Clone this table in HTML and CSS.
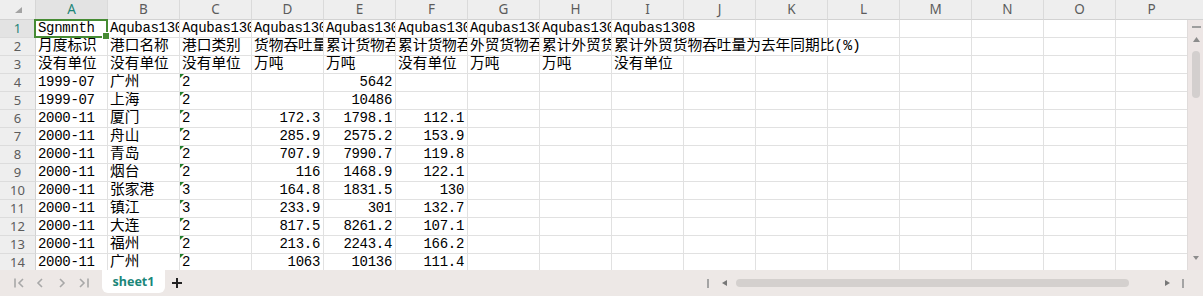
FILE: index.html
```html
<!DOCTYPE html>
<html lang="zh-CN">
<head>
<meta charset="utf-8">
<title>sheet1</title>
<link rel="stylesheet" href="styles.css">
</head>
<body>
<div class="app">
  <div class="main">
    <div class="sheet">
      <div class="grid">
        <div class="corner"><svg width="7" height="6" viewBox="0 0 7 6"><polygon points="7,0 7,6 0,6" fill="#a3a3a3"/></svg></div>
        <div class="ch active">A</div><div class="ch">B</div><div class="ch">C</div><div class="ch">D</div><div class="ch">E</div><div class="ch">F</div><div class="ch">G</div><div class="ch">H</div><div class="ch">I</div><div class="ch">J</div><div class="ch">K</div><div class="ch">L</div><div class="ch">M</div><div class="ch">N</div><div class="ch">O</div><div class="ch">P</div>

        <div class="rh active">1</div>
        <div class="c sel">Sgnmnth</div><div class="c">Aqubas1301</div><div class="c">Aqubas1302</div><div class="c">Aqubas1303</div><div class="c">Aqubas1304</div><div class="c">Aqubas1305</div><div class="c">Aqubas1306</div><div class="c">Aqubas1307</div><div class="c span2">Aqubas1308</div>
        <div class="c"></div><div class="c"></div><div class="c"></div><div class="c"></div><div class="c"></div><div class="c"></div>

        <div class="rh">2</div>
        <div class="c zh">月度标识</div><div class="c zh">港口名称</div><div class="c zh">港口类别</div><div class="c zh">货物吞吐量</div><div class="c zh">累计货物吞吐量</div><div class="c zh">累计货物吞吐量为去年同期比(%)</div><div class="c zh">外贸货物吞吐量</div><div class="c zh">累计外贸货物吞吐量</div><div class="c zh span4">累计外贸货物吞吐量为去年同期比(%)</div>
        <div class="c"></div><div class="c"></div><div class="c"></div><div class="c"></div>

        <div class="rh">3</div>
        <div class="c zh">没有单位</div><div class="c zh">没有单位</div><div class="c zh">没有单位</div><div class="c zh">万吨</div><div class="c zh">万吨</div><div class="c zh">没有单位</div><div class="c zh">万吨</div><div class="c zh">万吨</div><div class="c zh">没有单位</div>
        <div class="c"></div><div class="c"></div><div class="c"></div><div class="c"></div><div class="c"></div><div class="c"></div><div class="c"></div>

        <div class="rh">4</div>
        <div class="c">1999-07</div><div class="c zh">广州</div><div class="c t">2</div><div class="c n"></div><div class="c n">5642</div><div class="c n"></div>
        <div class="c"></div><div class="c"></div><div class="c"></div><div class="c"></div><div class="c"></div><div class="c"></div><div class="c"></div><div class="c"></div><div class="c"></div><div class="c"></div>

        <div class="rh">5</div>
        <div class="c">1999-07</div><div class="c zh">上海</div><div class="c t">2</div><div class="c n"></div><div class="c n">10486</div><div class="c n"></div>
        <div class="c"></div><div class="c"></div><div class="c"></div><div class="c"></div><div class="c"></div><div class="c"></div><div class="c"></div><div class="c"></div><div class="c"></div><div class="c"></div>

        <div class="rh">6</div>
        <div class="c">2000-11</div><div class="c zh">厦门</div><div class="c t">2</div><div class="c n">172.3</div><div class="c n">1798.1</div><div class="c n">112.1</div>
        <div class="c"></div><div class="c"></div><div class="c"></div><div class="c"></div><div class="c"></div><div class="c"></div><div class="c"></div><div class="c"></div><div class="c"></div><div class="c"></div>

        <div class="rh">7</div>
        <div class="c">2000-11</div><div class="c zh">舟山</div><div class="c t">2</div><div class="c n">285.9</div><div class="c n">2575.2</div><div class="c n">153.9</div>
        <div class="c"></div><div class="c"></div><div class="c"></div><div class="c"></div><div class="c"></div><div class="c"></div><div class="c"></div><div class="c"></div><div class="c"></div><div class="c"></div>

        <div class="rh">8</div>
        <div class="c">2000-11</div><div class="c zh">青岛</div><div class="c t">2</div><div class="c n">707.9</div><div class="c n">7990.7</div><div class="c n">119.8</div>
        <div class="c"></div><div class="c"></div><div class="c"></div><div class="c"></div><div class="c"></div><div class="c"></div><div class="c"></div><div class="c"></div><div class="c"></div><div class="c"></div>

        <div class="rh">9</div>
        <div class="c">2000-11</div><div class="c zh">烟台</div><div class="c t">2</div><div class="c n">116</div><div class="c n">1468.9</div><div class="c n">122.1</div>
        <div class="c"></div><div class="c"></div><div class="c"></div><div class="c"></div><div class="c"></div><div class="c"></div><div class="c"></div><div class="c"></div><div class="c"></div><div class="c"></div>

        <div class="rh">10</div>
        <div class="c">2000-11</div><div class="c zh">张家港</div><div class="c t">3</div><div class="c n">164.8</div><div class="c n">1831.5</div><div class="c n">130</div>
        <div class="c"></div><div class="c"></div><div class="c"></div><div class="c"></div><div class="c"></div><div class="c"></div><div class="c"></div><div class="c"></div><div class="c"></div><div class="c"></div>

        <div class="rh">11</div>
        <div class="c">2000-11</div><div class="c zh">镇江</div><div class="c t">3</div><div class="c n">233.9</div><div class="c n">301</div><div class="c n">132.7</div>
        <div class="c"></div><div class="c"></div><div class="c"></div><div class="c"></div><div class="c"></div><div class="c"></div><div class="c"></div><div class="c"></div><div class="c"></div><div class="c"></div>

        <div class="rh">12</div>
        <div class="c">2000-11</div><div class="c zh">大连</div><div class="c t">2</div><div class="c n">817.5</div><div class="c n">8261.2</div><div class="c n">107.1</div>
        <div class="c"></div><div class="c"></div><div class="c"></div><div class="c"></div><div class="c"></div><div class="c"></div><div class="c"></div><div class="c"></div><div class="c"></div><div class="c"></div>

        <div class="rh">13</div>
        <div class="c">2000-11</div><div class="c zh">福州</div><div class="c t">2</div><div class="c n">213.6</div><div class="c n">2243.4</div><div class="c n">166.2</div>
        <div class="c"></div><div class="c"></div><div class="c"></div><div class="c"></div><div class="c"></div><div class="c"></div><div class="c"></div><div class="c"></div><div class="c"></div><div class="c"></div>

        <div class="rh">14</div>
        <div class="c">2000-11</div><div class="c zh">广州</div><div class="c t">2</div><div class="c n">1063</div><div class="c n">10136</div><div class="c n">111.4</div>
        <div class="c"></div><div class="c"></div><div class="c"></div><div class="c"></div><div class="c"></div><div class="c"></div><div class="c"></div><div class="c"></div><div class="c"></div><div class="c"></div>
      </div>
    </div>
    <div class="vbar">
      <div class="vbar-head"></div>
      <div class="vbar-track">
        <div class="vdash"></div>
        <svg class="varrow-up" width="7" height="5" viewBox="0 0 7 5"><polygon points="3.5,0 7,5 0,5" fill="#8c8c8c"/></svg>
        <div class="vthumb"></div>
        <svg class="varrow-down" width="6" height="4" viewBox="0 0 6 4"><polygon points="0,0 6,0 3,4" fill="#8c8c8c"/></svg>
      </div>
    </div>
  </div>
  <div class="tabbar">
    <svg class="nav" width="76" height="10" viewBox="0 0 76 10">
      <g fill="none" stroke="#a8a8a8" stroke-width="1.6">
        <line x1="1" y1="0.5" x2="1" y2="9.5"/>
        <polyline points="9,1 5,5 9,9"/>
        <polyline points="28,1 24,5 28,9"/>
        <polyline points="46,1 50,5 46,9"/>
        <polyline points="66,1 70,5 66,9"/>
        <line x1="74" y1="0.5" x2="74" y2="9.5"/>
      </g>
    </svg>
    <div class="tab">sheet1</div>
    <svg class="add" width="10" height="10" viewBox="0 0 10 10">
      <g stroke="#222" stroke-width="2"><line x1="0" y1="5" x2="10" y2="5"/><line x1="5" y1="0" x2="5" y2="10"/></g>
    </svg>
    <div class="hscroll">
      <div class="hbar"></div>
      <svg class="hleft" width="5" height="6" viewBox="0 0 5 6"><polygon points="5,0 5,6 0,3" fill="#777"/></svg>
      <div class="htrack"></div>
      <svg class="hright" width="5" height="6" viewBox="0 0 5 6"><polygon points="0,0 0,6 5,3" fill="#777"/></svg>
      <div class="hbar"></div>
    </div>
  </div>
</div>
</body>
</html>
```

FILE: styles.css
```css
* {
  box-sizing: border-box;
  margin: 0;
  padding: 0;
}

body {
  width: 1203px;
  height: 296px;
  overflow: hidden;
  background: #ffffff;
  font-family: "Liberation Mono", "Noto Sans CJK SC", monospace;
}

.app {
  display: flex;
  flex-direction: column;
  height: 296px;
}

.main {
  display: flex;
  height: 270px;
  overflow: hidden;
}

.sheet {
  flex: none;
  width: 1187px;
  overflow: hidden;
}

.grid {
  display: grid;
  grid-template-columns: 36px repeat(16, 72px);
  grid-template-rows: 20px;
  grid-auto-rows: 18px;
  width: 1188px;
}

.corner {
  display: flex;
  justify-content: flex-end;
  align-items: flex-end;
  padding: 0 13px 6px 0;
  background: #eeeeee;
  border-right: 1px solid #d6d6d6;
  border-bottom: 1px solid #d2d2d2;
}

.ch {
  background: #eeeeee;
  border-right: 1px solid #dadada;
  border-bottom: 1px solid #d2d2d2;
  font-family: "Noto Sans", "Noto Sans CJK SC", sans-serif;
  font-size: 13.5px;
  line-height: 19px;
  color: #5c5c5c;
  text-align: center;
}

.rh {
  background: #eeeeee;
  border-right: 1px solid #d2d2d2;
  border-bottom: 1px solid #dcdcdc;
  font-family: "Noto Sans", "Noto Sans CJK SC", sans-serif;
  font-size: 13px;
  line-height: 17px;
  color: #5c5c5c;
  text-align: center;
}

.ch.active,
.rh.active {
  background: #e3e3e3;
  color: #1d8577;
}

.c {
  border-right: 1px solid #e1e1e1;
  border-bottom: 1px solid #e1e1e1;
  padding: 0 2px;
  white-space: nowrap;
  overflow: hidden;
  font-size: 14px;
  letter-spacing: -0.3px;
  line-height: 17px;
  color: #000000;
}

.zh {
  font-size: 14.7px;
  letter-spacing: 0;
}

.n {
  text-align: right;
  padding-right: 3px;
}

.t {
  position: relative;
}

.t::before {
  content: "";
  position: absolute;
  top: 0;
  left: 0;
  border-top: 4px solid #1f7f2a;
  border-right: 4px solid transparent;
}

.span2 {
  grid-column: span 2;
}

.span4 {
  grid-column: span 4;
}

.sel {
  position: relative;
  overflow: visible;
}

.sel::before {
  content: "";
  position: absolute;
  top: -1px;
  left: -2px;
  right: -1px;
  bottom: -1px;
  border: 2px solid #468b33;
  z-index: 2;
}

.sel::after {
  content: "";
  position: absolute;
  right: -3px;
  bottom: -3px;
  width: 6px;
  height: 6px;
  background: #468b33;
  border: 1px solid #ffffff;
  z-index: 3;
}

/* vertical scrollbar */
.vbar {
  flex: none;
  width: 16px;
  display: flex;
  flex-direction: column;
}

.vbar-head {
  height: 20px;
  background: #eeeeee;
  border-bottom: 1px solid #d2d2d2;
}

.vbar-track {
  flex: 1;
  display: flex;
  flex-direction: column;
  align-items: center;
  padding: 6px 0 10px 1px;
  background: #ede6e5;
  border-left: 1px solid #e0dcdb;
}

.vdash {
  width: 9px;
  height: 2px;
  background: #9e9e9e;
}

.varrow-up {
  margin-top: 9px;
}

.vthumb {
  margin-top: 9px;
  width: 8px;
  height: 47px;
  border-radius: 4px;
  background: #d3cfce;
}

.varrow-down {
  margin-top: auto;
}

/* bottom bar */
.tabbar {
  flex: none;
  height: 26px;
  display: flex;
  align-items: center;
  background: #ede8e6;
}

.nav {
  margin-left: 14px;
}

.tab {
  align-self: flex-start;
  margin-left: 12px;
  width: 63px;
  height: 23px;
  background: #ffffff;
  border-radius: 0 0 6px 6px;
  font-family: "Noto Sans", sans-serif;
  font-weight: 700;
  font-size: 12.5px;
  line-height: 23px;
  color: #1a8679;
  text-align: center;
}

.add {
  margin-left: 7px;
}

.hscroll {
  margin-left: auto;
  margin-right: 19px;
  display: flex;
  align-items: center;
}

.hbar {
  width: 2px;
  height: 9px;
  background: #a4a4a4;
}

.hleft {
  margin-left: 13px;
}

.htrack {
  margin-left: 9px;
  width: 393px;
  height: 8px;
  border-radius: 4px;
  background: #d4d0ce;
}

.hright {
  margin-left: 36px;
  margin-right: 12px;
}
```
